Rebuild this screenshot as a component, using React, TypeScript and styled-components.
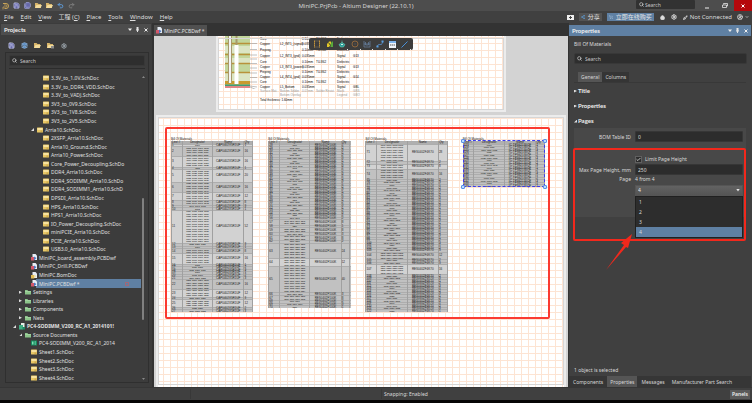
import React from "react";
import styled, { createGlobalStyle, css } from "styled-components";
import {
  Check, ChevronDown, CircleUserRound, Home, Layers, PlugZap,
  Redo2, Save, SaveAll, Search, Settings, Share2, Undo2, ShoppingCart,
} from "lucide-react";

const GlobalStyle = createGlobalStyle`
  * { box-sizing: border-box; }
  html, body { margin: 0; background: #fff; }
  body { overflow: hidden; }
  body, button, input, select {
    font-family: "Noto Sans", "Noto Sans CJK SC", sans-serif;
    font-size: 5px;
    line-height: 8px;
    color: #dadada;
  }
  button, input, select { margin: 0; padding: 0; border: 0; background: none; outline: none; }
  svg { display: block; flex: none; }
`;

/* ---------- shell ---------- */

const Shell = styled.div`
  display: grid;
  grid-template-rows: 11px 12px minmax(0, 1fr) 13px 3px;
  height: calc(100vh - 1px);
  margin-right: 1px;
  background: #404040;
`;
const TitleBar = styled.header`
  display: grid;
  grid-template-columns: 1fr auto 1fr;
  align-items: center;
  background: #4d4d4d;
`;
const QuickIcons = styled.div`
  display: flex;
  align-items: center;
  gap: 4px;
  padding-left: 2px;
`;
const IconButton = styled.button<{ $tone?: string }>`
  display: flex;
  align-items: center;
  justify-content: center;
  width: 7px;
  height: 8px;
  color: ${(p) => p.$tone ?? "#dcdcdc"};
`;
const AppTitle = styled.h1`
  margin: 0 0 0 -40px;
  font-size: 6px;
  font-weight: 400;
  color: #d6d6d6;
  white-space: nowrap;
`;
const WindowControls = styled.div`
  display: flex;
  align-items: stretch;
  justify-content: flex-end;
  height: 11px;
`;
const TitleSearch = styled.label`
  display: flex;
  align-items: center;
  gap: 1px;
  width: 59px;
  height: 9px;
  margin-right: 3px;
  padding-left: 3px;
  background: #323232;
  border-radius: 1px;
`;
const PlainInput = styled.input`
  flex: 1;
  min-width: 0;
  height: 8px;
  &::placeholder { color: #c8c8c8; opacity: 1; }
`;
const WinButton = styled.button<{ $close?: boolean }>`
  display: flex;
  align-items: center;
  justify-content: center;
  width: 18px;
  color: #eee;
  ${(p) => p.$close && css`background: #b5080c;`}
`;

const MenuBar = styled.nav`
  display: flex;
  align-items: center;
  justify-content: space-between;
  background: #404040;
`;
const MenuList = styled.div`
  display: flex;
  gap: 7px;
  padding-left: 4px;
  button { font-size: 6px; color: #dedede; white-space: nowrap; }
`;
const MenuRight = styled.div`
  display: flex;
  align-items: center;
  gap: 5px;
  padding-right: 3px;
`;
const PillButton = styled.button<{ $blue?: boolean }>`
  display: flex;
  align-items: center;
  justify-content: center;
  gap: 3px;
  height: 8px;
  padding: 0 2px;
  font-size: 6px;
  line-height: 8px;
  white-space: nowrap;
  color: #e4e4e4;
  background: ${(p) => (p.$blue ? "#5f80a3" : "#535353")};
  svg { color: ${(p) => (p.$blue ? "#b6cfe8" : "#62a4e0")}; }
`;
const Account = styled.span`
  display: flex;
  align-items: center;
  gap: 2px;
  font-size: 6px;
  white-space: nowrap;
`;

const Workspace = styled.div`
  display: grid;
  grid-template-columns: 154px minmax(0, 1fr) 184px;
  min-height: 0;
`;

/* ---------- shared panel parts ---------- */

const PanelHeader = styled.div<{ $active?: boolean }>`
  display: flex;
  align-items: center;
  justify-content: space-between;
  flex: none;
  height: 11px;
  padding: 0 2px 0 3px;
  background: ${(p) => (p.$active ? "#5f80a3" : "#4d4d4d")};
  h2 { margin: 0; font: 700 6px/8px Lato, sans-serif; color: #f0f0f0; }
`;
const HeaderButtons = styled.div`
  display: flex;
  gap: 1px;
`;
const SearchField = styled.label`
  display: flex;
  align-items: center;
  gap: 3px;
  flex: none;
  height: 11px;
  padding: 0 3px 0 2px;
  background: #2e2e2e;
  border: 1px solid #383838;
  border-radius: 2px;
`;

/* ---------- projects ---------- */

const ProjectsPanel = styled.aside`
  display: flex;
  flex-direction: column;
  min-height: 0;
  padding: 1px 1px 4px;
  background: #3c3c3c;
  border-right: 2px solid #333;
`;
const ProjectTools = styled.div`
  display: flex;
  align-items: center;
  gap: 6px;
  height: 17px;
  padding: 4px 0 0 7px;
`;
const ProjectBody = styled.div`
  display: flex;
  flex-direction: column;
  flex: 1;
  min-height: 0;
  margin: 0 2px 0 4px;
  padding: 2px 3px 0;
  border: 1px solid #2f2f2f;
`;
const TreeArea = styled.div`
  display: grid;
  grid-template-columns: minmax(0, 1fr) 4px;
  flex: 1;
  min-height: 0;
  margin-top: 2px;
  padding-top: 5px;
  border-top: 1px solid #2c2c2c;
`;
const TreeList = styled.ul`
  display: grid;
  grid-auto-rows: minmax(0, 1fr);
  min-height: 0;
  margin: 0;
  padding: 0;
  list-style: none;
`;
const TreeRow = styled.li<{ $level: number; $selected?: boolean; $bold?: boolean }>`
  display: flex;
  align-items: center;
  gap: 2px;
  min-height: 0;
  margin-left: ${(p) => p.$level * 6 - 2}px;
  white-space: nowrap;
  color: #e0e0e0;
  font-weight: ${(p) => (p.$bold ? 700 : 400)};
  ${(p) => p.$selected && css`background: linear-gradient(90deg, transparent 11px, #5f80a3 11px);`}
`;
const Twist = styled.i<{ $state?: "open" | "closed" }>`
  width: 3px;
  height: 3px;
  flex: none;
  margin-right: 1px;
  background: ${(p) => (p.$state ? "#dfdfdf" : "transparent")};
  clip-path: ${(p) => (p.$state === "open" ? "polygon(100% 0, 100% 100%, 0 100%)" : "polygon(0 0, 100% 50%, 0 100%)")};
`;
const LockMark = styled.i`
  width: 4px;
  height: 4px;
  margin: 0 12px 0 auto;
  border: 1px solid #a06878;
`;
const ScrollTrack = styled.div`
  display: flex;
  flex-direction: column;
  align-items: center;
  justify-content: space-between;
  padding: 2px 0;
`;
const ScrollThumb = styled.div`
  width: 2px;
  height: 40%;
  margin-top: 62px;
  border-radius: 1px;
  background: #808080;
`;

type Kind = "sch" | "dwf" | "bom" | "folder" | "prj" | "net";

function FileIcon({ kind }: { kind: Kind }) {
  if (kind === "sch")
    return (
      <svg width="6" height="6" viewBox="0 0 12 12">
        <rect y="1" width="12" height="10" rx="1" fill="#e8c766" />
        <rect x="1" y="2" width="10" height="4" fill="#f6e2a0" />
        <path d="M7 8h4M7 10h4" stroke="#a98732" />
      </svg>
    );
  if (kind === "folder")
    return (
      <svg width="6" height="6" viewBox="0 0 12 12">
        <path d="M0 2h5l1 2h6v7H0z" fill="#8cc58a" />
        <path d="M0 5h12" stroke="#b9e0b4" />
      </svg>
    );
  if (kind === "prj")
    return (
      <svg width="6" height="7" viewBox="0 0 12 14">
        <path d="M4 0h7v9H4z" fill="#e4efe8" />
        <path d="M0 4h8v9H0z" fill="#3fae83" />
        <path d="M7 8h5v5H7z" fill="#1f8a64" />
      </svg>
    );
  if (kind === "net")
    return (
      <svg width="6" height="6" viewBox="0 0 12 12">
        <path d="M0 1h12v10H0z" fill="#178a5e" />
        <path d="M2 3h3v6H2zM7 3h3v2H7zM7 7h3v2H7z" fill="#7fe0b6" />
      </svg>
    );
  return (
    <svg width="6" height="7" viewBox="0 0 12 14">
      <path d="M3 0h6l3 3v9H3z" fill="#e8eef6" />
      <path d="M0 6h6v7H0z" fill={kind === "bom" ? "#e3bd55" : "#d4586a"} />
      <path d="M6 5l5 3-5 5z" fill={kind === "bom" ? "#efe0a8" : "#4a78c4"} />
    </svg>
  );
}

type Node = { text: string; kind: Kind; level: number; state?: "open" | "closed"; selected?: boolean; bold?: boolean };

const sheets = (level: number, names: string[]): Node[] => names.map((text) => ({ text, kind: "sch", level }));

const TREE: Node[] = [
  ...sheets(5, ["3.3V_to_1.0V.SchDoc", "3.3V_to_DDR4_VDD.SchDoc", "3.3V_to_VADJ.SchDoc", "3V3_to_0V9.SchDoc", "3V3_to_1V8.SchDoc", "3V3_to_2V5.SchDoc"]),
  { text: "Arria10.SchDoc", kind: "sch", level: 4, state: "open" },
  ...sheets(5, [
    "2XSFP_Arria10.SchDoc", "Arria10_Ground.SchDoc", "Arria10_Power.SchDoc", "Core_Power_Decoupling.SchDo",
    "DDR4_Arria10.SchDoc", "DDR4_SODIMM_Arria10.SchDo", "DDR4_SODIMM1_Arria10.SchD", "DPSDI_Arria10.SchDoc",
    "HPS_Arria10.SchDoc", "HPS1_Arria10.SchDoc", "IO_Power_Decoupling.SchDoc", "miniPCIE_Arria10.SchDoc",
    "PCIE_Arria10.SchDoc", "USB3.0_Arria10.SchDoc",
  ]),
  { text: "MiniPC_board_assembly.PCBDwf", kind: "dwf", level: 3 },
  { text: "MiniPC_Drill.PCBDwf", kind: "dwf", level: 3 },
  { text: "MiniPC.BomDoc", kind: "bom", level: 3 },
  { text: "MiniPC.PCBDwf *", kind: "dwf", level: 3, selected: true },
  { text: "Settings", kind: "folder", level: 2, state: "closed" },
  { text: "Libraries", kind: "folder", level: 2, state: "closed" },
  { text: "Components", kind: "folder", level: 2, state: "closed" },
  { text: "Nets", kind: "folder", level: 2, state: "closed" },
  { text: "PC4-SODIMM_V200_RC_A1_2014101!", kind: "prj", level: 1, state: "open", bold: true },
  { text: "Source Documents", kind: "folder", level: 2, state: "open" },
  { text: "PC4-SODIMM_V200_RC_A1_2014", kind: "net", level: 3 },
  ...sheets(3, ["Sheet1.SchDoc", "Sheet2.SchDoc", "Sheet3.SchDoc", "Sheet4.SchDoc"]),
];

/* ---------- document area ---------- */

const Center = styled.main`
  display: flex;
  flex-direction: column;
  min-width: 0;
  min-height: 0;
`;
const DocTabs = styled.div`
  display: flex;
  align-items: flex-end;
  flex: none;
  height: 13px;
  background: #333;
`;
const DocTab = styled.button`
  display: flex;
  align-items: center;
  gap: 2px;
  height: 11px;
  padding: 0 2px;
  color: #e4e4e4;
  background: #505050;
`;
const Canvas = styled.div`
  position: relative;
  display: flex;
  flex-direction: column;
  flex: 1;
  min-height: 0;
  overflow: hidden;
  background: #d3d3d3;
`;
const Sheet = styled.section<{ $cols: number; $rows: number }>`
  border: 2px solid #ececec;
  outline: 1px solid #d6d6d6;
  outline-offset: -3px;
  background:
    repeating-linear-gradient(90deg, transparent 0 5px, #fde4d3 5px 6px, transparent 6px calc(100% / ${(p) => p.$cols})),
    repeating-linear-gradient(0deg, transparent 0 5px, #fde4d3 5px 6px, transparent 6px calc(100% / ${(p) => p.$rows})),
    #fff;
`;
const StackSheet = styled(Sheet)`
  display: flex;
  gap: 3px;
  flex: none;
  width: 70%;
  height: 76px;
  margin: 0 auto;
  padding-left: 7px;
  border-top: 0;
`;
const StackTable = styled.table`
  display: grid;
  grid-auto-rows: min-content;
  width: 110px;
  font-family: "Liberation Sans", sans-serif;
  font-size: 3px;
  line-height: 4px;
  tbody { display: contents; }
`;
const StackRow = styled.tr<{ $faint?: boolean; $tall?: boolean }>`
  display: grid;
  grid-template-columns: 20px 22px 14px 21px 16px 1fr;
  align-items: center;
  height: ${(p) => (p.$tall ? 6 : p.$faint ? 4 : 5)}px;
  color: ${(p) => (p.$faint ? "#999" : "#000")};
  td { padding: 0; white-space: nowrap; }
`;

const STACK: string[][] = [
  ["Core", "", "0.10mm", "TU-862", "Dielectric", ""],
  ["Copper", "L2_INT1_(signal)", "0.035mm", "", "Signal", "G12"],
  ["Prepreg", "", "0.10mm", "TU-862", "Dielectric", ""],
  ["Copper", "L2_INT3_(gnd)", "0.035mm", "", "Signal", "G13"],
  ["Core", "", "0.10mm", "TU-862", "Dielectric", ""],
  ["Copper", "L3_INT3_(power)", "0.035mm", "", "Signal", "G13"],
  ["Prepreg", "", "0.10mm", "TU-862", "Dielectric", ""],
  ["Copper", "L4_INT4_(gnd)", "0.035mm", "", "Signal", "G14"],
  ["Core", "", "0.10mm", "TU-862", "Dielectric", ""],
  ["Copper", "L5_Bottom", "0.035mm", "", "Signal", "GBL"],
  ["Surface Mat.", "Bottom Solder", "0.01mm", "Solder Resist", "Mask", "GBS"],
  ["", "Bottom Overlay", "", "", "Legend", "GBO"],
  ["Total thickness: 1.60mm"],
];
const TALL_ROWS = [1, 2, 3];

function StackDrawing() {
  return (
    <svg width="32" height="53" viewBox="0 0 32 53">
      <rect width="25" height="49" fill="#c2d69b" />
      <path d="M0 10h25v7H0zM0 22h25v5H0zM0 36h25v9H0z" fill="#dbe5c4" />
      <path d="M0 7.5h25M0 18.5h25M0 27.5h25M0 36.5h25" stroke="#b8923a" strokeWidth="1.4" />
      <rect y="45" width="25" height="3.5" fill="#c99a2e" />
      <rect y="48.5" width="25" height="1.5" fill="#3f9c78" />
      <rect y="50" width="25" height="2" fill="#e08585" />
      <rect x="3" width="4" height="47" fill="#a79a6c" />
      <rect x="4" width="2" height="47" fill="#f4f4f4" />
      <path d="M11.5 0v9" stroke="#a79a6c" strokeWidth="2" />
      <rect x="9.5" y="9" width="4" height="39" fill="#fff" />
      <path d="M25 2.5h7M25 7.5h7M25 13.5h7M25 19h7M25 23h7M25 27.5h7M25 32h7M25 37h7M25 41.5h7M25 46h7M25 50l7 1M25 51l7 3" stroke="#999" strokeWidth=".6" />
    </svg>
  );
}

const BomSheet = styled(Sheet)`
  flex: 1;
  min-height: 0;
  margin: 3px 2px 0;
  padding: 10px 14px 0 7px;
  border-bottom: 0;
`;
const BomHighlight = styled.div`
  display: flex;
  align-items: flex-start;
  justify-content: space-between;
  height: 192px;
  padding: 8px 3px 0 4px;
  border: 2px solid #fb3a30;
  border-radius: 2px;
`;
const Bom = styled.table<{ $rows: string }>`
  display: grid;
  grid-template-rows: 4px ${(p) => p.$rows};
  width: 100%;
  height: 100%;
  min-height: 0;
  font-family: "Liberation Sans", sans-serif;
  font-size: 3px;
  line-height: 2px;
  color: #222;
  caption { display: block; text-align: left; line-height: 4px; white-space: nowrap; }
  thead, tbody { display: contents; }
`;
const BomFrame = styled.div<{ $h: number; $selected?: boolean }>`
  position: relative;
  display: grid;
  grid-template-rows: minmax(0, 1fr);
  flex: 0 0 22%;
  height: ${(p) => p.$h}px;
  ${(p) => p.$selected && css`
    &::after {
      content: "";
      position: absolute;
      inset: 3px 0 0;
      border: 1px dashed #3c3cf0;
    }
  `}
`;
const Handle = styled.i<{ $right?: boolean; $bottom?: boolean }>`
  position: absolute;
  z-index: 1;
  width: 4px;
  height: 4px;
  ${(p) => (p.$right ? "right: -2px;" : "left: -2px;")}
  ${(p) => (p.$bottom ? "bottom: -2px;" : "top: 2px;")}
  border: 1px solid #5b8fe8;
  border-radius: 1px;
  background: #b8dcff;
`;
const BomRow = styled.tr<{ $tone: "head" | "light" | "dark" }>`
  display: grid;
  grid-template-columns: 11fr 31fr 32fr 10fr;
  grid-template-rows: minmax(0, 1fr);
  min-height: 0;
  background: ${(p) => ({ head: "#b0b0b0", light: "#d2d2d2", dark: "#c1c1c1" })[p.$tone]};
  box-shadow: inset 0 1px #adadad;
  th, td {
    display: grid;
    align-content: space-evenly;
    min-width: 0;
    min-height: 0;
    padding: 0;
    font-weight: 400;
    text-align: left;
    white-space: nowrap;
    border-left: 1px solid #a0a0a0;
  }
  th:last-child, td:last-child { border-right: 1px solid #a0a0a0; }
  th:nth-child(2), th:nth-child(3), td:nth-child(2), td:nth-child(3) { text-align: center; }
`;
const Designators = styled.td`
  font-size: 2px;
  color: #000;
`;

const ones = (n: number) => Array<number>(n).fill(1);

const BOMS = [
  { prefix: "C", part: "CAP0402X5R1UF", start: 1, height: 175, lines: [1, 4, 4, 1, 5, 4, 3, 2, 1, 1, 13, 1, 1, 2, 4, 1, 1, 1, 1, 1, 1, 4, 3, 1, 3, 1, 1], light: [0, 2, 4, 6, 10, 14, 22, 24] },
  { prefix: "J", part: "RES0402F100K", start: 28, height: 171, lines: [...ones(29), 2, 1, 2, 1, 2, 1, 6, 3, 10, 1, 2, 1, 1, 1], light: [36] },
  { prefix: "R", part: "RES0402F4K70", start: 71, height: 175, lines: [7, 1, 2, 4, ...ones(29), 3, 1, 1, 4, ...ones(15)], light: [0, 2, 36] },
  { prefix: "U", part: "IC-TPS62130QF", start: 123, height: 50, lines: ones(17), light: [] as number[] },
];

function BomTable({ prefix, part, start, lines, light, height }: (typeof BOMS)[number]) {
  const selected = prefix === "U";
  return (
    <BomFrame $h={height} $selected={selected}>
      <Bom $rows={[1, ...lines].map((n) => `minmax(0, ${n}fr)`).join(" ")}>
        <caption>Bill Of Materials</caption>
        <thead>
          <BomRow $tone="head">
            <th scope="col">Line #</th>
            <th scope="col">Designator</th>
            <th scope="col">Name</th>
            <th scope="col">Qty</th>
          </BomRow>
        </thead>
        <tbody>
          {lines.map((count, i) => {
            const perLine = count > 1 ? 4 : 1 + ((i * 7) % 3);
            return (
              <BomRow key={i} $tone={light.includes(i) ? "light" : "dark"}>
                <td>{start + i}</td>
                <Designators>
                  {Array.from({ length: count }, (_, l) => (
                    <span key={l}>
                      {Array.from({ length: perLine }, (_, k) => `${prefix}${100 + i * 5 + l * 4 + k}`).join(", ")}
                    </span>
                  ))}
                </Designators>
                <td>{part}</td>
                <td>{count * perLine}</td>
              </BomRow>
            );
          })}
        </tbody>
      </Bom>
      {selected && <><Handle /><Handle $right /><Handle $bottom /><Handle $right $bottom /></>}
    </BomFrame>
  );
}

const FloatingBar = styled.div`
  position: absolute;
  top: 2px;
  left: 50%;
  display: flex;
  align-items: center;
  justify-content: space-around;
  width: 104px;
  height: 12px;
  margin-left: -52px;
  padding: 0 2px;
  border-radius: 2px;
  background: #3d3d3d;
`;
const ToolButton = styled.button<{ $more?: boolean }>`
  display: flex;
  align-items: center;
  justify-content: center;
  width: 12px;
  height: 12px;
  ${(p) => p.$more && css`background: linear-gradient(135deg, transparent 92%, #e8e8e8 92%);`}
`;

/* ---------- properties ---------- */

const PropertiesPanel = styled.aside`
  display: flex;
  flex-direction: column;
  min-width: 0;
  min-height: 0;
  padding: 2px 1px 0 0;
  background: #404040;
  border-left: 1px solid #333;
`;
const PropertiesBody = styled.div`
  display: flex;
  flex-direction: column;
  flex: 1;
  min-height: 0;
  padding: 4px 4px 0 5px;
`;
const ObjectKind = styled.p`
  margin: 0 0 5px;
`;
const Tabs = styled.div`
  display: flex;
  align-items: flex-end;
  height: 19px;
  margin: 0 1px 3px 0;
  padding-left: 4px;
  border-bottom: 1px solid #383838;
`;
const Tab = styled.button<{ $on?: boolean }>`
  height: 10px;
  padding: 0 3px;
  color: #d6d6d6;
  background: ${(p) => (p.$on ? "#555" : "#353535")};
`;
const SectionTitle = styled.h3`
  display: flex;
  align-items: center;
  height: 10px;
  margin: 0 0 5px;
  font: 700 6px/8px Lato, sans-serif;
  color: #f0f0f0;
`;
const PagesGroup = styled.div`
  position: relative;
  display: grid;
  grid-template-columns: 57px minmax(0, 1fr);
  column-gap: 4px;
  align-content: start;
  align-items: center;
  height: 89px;
  margin: -3px 1px 0 0;
  padding: 3px 3px 0 0;
  background: #484848;
  label { text-align: right; white-space: nowrap; }
`;
const Field = styled.input`
  width: 100%;
  height: 11px;
  padding: 0 2px;
  background: #2c2c2c;
  border: 1px solid #363636;
  border-radius: 1px;
`;
const CheckLine = styled.div`
  grid-column: 2;
  display: flex;
  align-items: center;
  gap: 3px;
  height: 10px;
  margin-top: 12px;
`;
const CheckBox = styled.span`
  display: grid;
  width: 7px;
  height: 7px;
  background: #2c2c2c;
  border: 1px solid #606060;
  input { appearance: none; grid-area: 1 / 1; width: 5px; height: 5px; }
  svg { grid-area: 1 / 1; pointer-events: none; }
`;
const SelectBox = styled.div`
  position: relative;
  grid-column: 2;
  display: flex;
  align-items: center;
  height: 12px;
  margin-top: 1px;
  select {
    appearance: none;
    width: 100%;
    height: 11px;
    padding: 0 2px;
    color: #eee;
    border: 1px solid #555;
    background: linear-gradient(#626262, #555);
  }
`;
const DownMark = styled.i`
  position: absolute;
  right: 3px;
  width: 4px;
  height: 3px;
  background: #e4e4e4;
  pointer-events: none;
  clip-path: polygon(0 0, 100% 0, 50% 100%);
`;
const Options = styled.ul`
  position: absolute;
  z-index: 1;
  top: 12px;
  left: 0;
  right: 0;
  margin: 0;
  padding: 0;
  list-style: none;
  background: #2d2d2d;
  border: 1px solid #202020;
`;
const Option = styled.li<{ $on?: boolean }>`
  height: 10px;
  padding: 0 3px;
  line-height: 10px;
  background: ${(p) => (p.$on ? "#5f80a3" : "transparent")};
`;
const Callout = styled.div`
  position: absolute;
  z-index: 2;
  top: 20px;
  left: -1px;
  right: 0;
  height: 93px;
  border: 2px solid #f2281c;
  border-radius: 2px;
  pointer-events: none;
`;
const CalloutArrow = styled.svg`
  position: absolute;
  z-index: 3;
  top: 106px;
  left: 32px;
`;
const SelectionNote = styled.p`
  margin: auto 0 1px;
`;
const PanelTabs = styled.div`
  display: flex;
  flex: none;
  gap: 1px;
  height: 11px;
  margin-top: 1px;
  padding-left: 1px;
  background: #363636;
`;
const PanelTab = styled.button<{ $on?: boolean }>`
  padding: 0 3px;
  white-space: nowrap;
  color: #d6d6d6;
  background: ${(p) => (p.$on ? "#555" : "transparent")};
`;

const StatusBar = styled.footer`
  display: grid;
  grid-template-columns: 190px 191px 1fr auto;
  align-items: center;
  padding-right: 2px;
  background: #404040;
  border-top: 1px solid #363636;
`;
const StatusCell = styled.span`
  height: 10px;
  padding-left: 2px;
  line-height: 10px;
  border-left: 1px solid #383838;
`;
const PanelsButton = styled.button`
  height: 9px;
  padding: 0 2px;
  background: #5a5a5a;
  font-weight: 600;
  color: #eee;
`;
const Desktop = styled.div`
  background: #060505;
`;

const MENUS = ["File", "Edit", "View", "工程 (C)", "Place", "Tools", "Window", "Help"];

function MenuLabel({ text }: { text: string }) {
  if (text.includes("(C)")) return <>工程 (<u>C</u>)</>;
  return <><u>{text[0]}</u>{text.slice(1)}</>;
}

function OpenFolder({ dark }: { dark?: boolean }) {
  return (
    <svg width="7" height="7" viewBox="0 0 14 14">
      <path d="M0 2h5l2 2h5v8H0z" fill="#d8b56a" />
      <path d="M3 6h11l-3 6H0z" fill="#f3dc9c" />
      {dark && <path d="M8 8h6v5H8z" fill="#8b8b8b" />}
    </svg>
  );
}

function PanelGlyphs() {
  return (
    <HeaderButtons>
      <IconButton aria-label="Panel menu">
        <svg width="4" height="3" viewBox="0 0 8 6"><path d="M0 1h8L4 6z" fill="#eee" /></svg>
      </IconButton>
      <IconButton aria-label="Pin panel">
        <svg width="3" height="5" viewBox="0 0 6 10"><path d="M1 0h4v5h1v2H0V5h1zM2 7h2v3H2z" fill="#e4e4e4" /></svg>
      </IconButton>
      <IconButton aria-label="Close panel">
        <svg width="4" height="4" viewBox="0 0 8 8"><path d="M1 1l6 6M7 1L1 7" stroke="#eee" strokeWidth="2" /></svg>
      </IconButton>
    </HeaderButtons>
  );
}

export default function App() {
  return (
    <>
      <GlobalStyle />
      <Shell>
        <TitleBar>
          <QuickIcons>
            <IconButton aria-label="Altium">
              <svg width="7" height="8" viewBox="0 0 14 16">
                <path d="M2 3h6a5 5 0 0 1 0 10H5" fill="none" stroke="#c9a457" strokeWidth="2" />
                <path d="M4 6h4a2 2 0 0 1 0 4H2v5" fill="none" stroke="#c9a457" strokeWidth="1.5" />
              </svg>
            </IconButton>
            <IconButton aria-label="Save" $tone="#c9cdf0"><Save size={7} fill="#6668a8" /></IconButton>
            <IconButton aria-label="Save all" $tone="#aeb2e6"><SaveAll size={7} fill="#6668a8" /></IconButton>
            <IconButton aria-label="Open"><OpenFolder /></IconButton>
            <IconButton aria-label="Open project"><OpenFolder /></IconButton>
            <IconButton aria-label="Undo" $tone="#5f9fe0"><Undo2 size={7} strokeWidth={3} /></IconButton>
            <IconButton aria-label="Redo" $tone="#808080"><Redo2 size={7} strokeWidth={3} /></IconButton>
          </QuickIcons>
          <AppTitle>MiniPC.PrjPcb - Altium Designer (22.10.1)</AppTitle>
          <WindowControls>
            <TitleSearch><Search size={5} strokeWidth={3} /><PlainInput placeholder="Search" aria-label="Search commands" /></TitleSearch>
            <WinButton aria-label="Minimize"><svg width="4" height="6" viewBox="0 0 4 6"><path d="M0 5h4" stroke="#eee" /></svg></WinButton>
            <WinButton aria-label="Restore">
              <svg width="6" height="5" viewBox="0 0 12 10"><path d="M3 3V1h8v5H9M1 4h8v5H1z" fill="none" stroke="#eee" strokeWidth="1.5" /></svg>
            </WinButton>
            <WinButton aria-label="Close" $close><svg width="4" height="4" viewBox="0 0 8 8"><path d="M1 1l6 6M7 1L1 7" stroke="#fff" strokeWidth="2" /></svg></WinButton>
          </WindowControls>
        </TitleBar>

        <MenuBar>
          <MenuList>{MENUS.map((m) => <button key={m}><MenuLabel text={m} /></button>)}</MenuList>
          <MenuRight>
            <IconButton aria-label="New"><svg width="7" height="5" viewBox="0 0 14 10"><path d="M0 0h14v10H0z" fill="#eee" /><path d="M7 2v6M4 5h6" stroke="#444" strokeWidth="2" /></svg></IconButton>
            <PillButton><Share2 size={4} fill="currentColor" />分享</PillButton>
            <PillButton $blue><ShoppingCart size={4} />立即在线购买</PillButton>
            <IconButton aria-label="Home"><Home size={5} strokeWidth={3} fill="#ddd" /></IconButton>
            <IconButton aria-label="Settings"><Settings size={6} strokeWidth={4} /></IconButton>
            <Account><PlugZap size={5} strokeWidth={4} />Not Connected</Account>
            <Account>
              <CircleUserRound size={6} strokeWidth={3} /><ChevronDown size={4} strokeWidth={4} />
            </Account>
          </MenuRight>
        </MenuBar>

        <Workspace>
          <ProjectsPanel>
            <PanelHeader><h2>Projects</h2><PanelGlyphs /></PanelHeader>
            <ProjectTools>
              <IconButton aria-label="Save" $tone="#d9dcf6"><Save size={7} fill="#6668a8" /></IconButton>
              <IconButton aria-label="Compile" $tone="#9cc4ec"><Layers size={7} fill="#5f8fc4" /></IconButton>
              <IconButton aria-label="Explore"><OpenFolder /></IconButton>
              <IconButton aria-label="Project options"><OpenFolder dark /></IconButton>
              <IconButton aria-label="Options" $tone="#aebac2"><Settings size={6} strokeWidth={3} /></IconButton>
            </ProjectTools>
            <ProjectBody>
              <SearchField><Search size={5} strokeWidth={3} /><PlainInput placeholder="Search" aria-label="Search projects" /></SearchField>
              <TreeArea>
                <TreeList>
                  {TREE.map((n, i) => (
                    <TreeRow key={i} $level={n.level} $selected={n.selected} $bold={n.bold}>
                      <Twist $state={n.state} />
                      <FileIcon kind={n.kind} />
                      <span>{n.text}</span>
                      {n.selected && <LockMark />}
                    </TreeRow>
                  ))}
                </TreeList>
                <ScrollTrack>
                  <svg width="3" height="2" viewBox="0 0 6 4"><path d="M0 4h6L3 0z" fill="#888" /></svg>
                  <ScrollThumb />
                  <svg width="3" height="2" viewBox="0 0 6 4"><path d="M0 0h6L3 4z" fill="#888" /></svg>
                </ScrollTrack>
              </TreeArea>
            </ProjectBody>
          </ProjectsPanel>

          <Center>
            <DocTabs><DocTab><FileIcon kind="dwf" />MiniPC.PCBDwf *</DocTab></DocTabs>
            <Canvas>
              <StackSheet $cols={41} $rows={11}>
                <StackDrawing />
                <StackTable>
                  <tbody>
                    {STACK.map((row, i) => (
                      <StackRow key={i} $faint={i === 10 || i === 11} $tall={TALL_ROWS.includes(i)}>
                        {row.map((c, k) => <td key={k}>{c}</td>)}
                      </StackRow>
                    ))}
                  </tbody>
                </StackTable>
              </StackSheet>
              <BomSheet $cols={59} $rows={39}>
                <BomHighlight>{BOMS.map((b) => <BomTable key={b.prefix} {...b} />)}</BomHighlight>
              </BomSheet>
              <FloatingBar>
                <ToolButton aria-label="Board view">
                  <svg width="8" height="8" viewBox="0 0 16 16"><path d="M3 2h10v12H3z" fill="none" stroke="#6f6350" strokeWidth="1.5" /><path d="M3 1v14M13 1v14" stroke="#c09238" strokeWidth="2" strokeDasharray="3 1" /></svg>
                </ToolButton>
                <ToolButton aria-label="Board section">
                  <svg width="8" height="8" viewBox="0 0 16 16"><path d="M2 14V8l4-5h4v5l-4 6z" fill="#e0c62a" /><path d="M9 14V8l3-5h2v11z" fill="#58a83c" /><path d="M5 5l4 6" stroke="#4a4a20" strokeWidth="2" /></svg>
                </ToolButton>
                <ToolButton aria-label="Component" $more>
                  <svg width="8" height="8" viewBox="0 0 16 16"><path d="M8 1v5M8 5l6 4-3 5H5L2 9z" fill="#2f9c98" stroke="#6fe0c0" /><path d="M6 9h4" stroke="#d0f4e8" strokeWidth="2" /></svg>
                </ToolButton>
                <ToolButton aria-label="Detail" $more>
                  <svg width="8" height="8" viewBox="0 0 16 16"><circle cx="8" cy="8" r="6" fill="none" stroke="#a8733c" strokeWidth="1.5" /><path d="M6 8h4" stroke="#76675a" /></svg>
                </ToolButton>
                <ToolButton aria-label="Dimension" $more>
                  <svg width="8" height="8" viewBox="0 0 16 16"><path d="M2 2v12h12V2M2 8h12M5 4v6h6V4" fill="none" stroke="#667f9e" strokeWidth="1.5" /></svg>
                </ToolButton>
                <ToolButton aria-label="Callout" $more>
                  <svg width="8" height="8" viewBox="0 0 16 16"><path d="M2 13l3-4h6l3-6" fill="none" stroke="#5590d0" strokeWidth="1.5" /><path d="M1 11h4v4H1zM11 1h4v4h-4z" fill="#5b9fe0" /></svg>
                </ToolButton>
                <ToolButton aria-label="Table" $more>
                  <svg width="7" height="7" viewBox="0 0 14 14"><path d="M0 0h14v14H0z" fill="#f0f5fb" /><path d="M0 0h14v4H0z" fill="#7eb4ec" /><path d="M2 8h10" stroke="#555" strokeWidth="2" strokeDasharray="3 1" /></svg>
                </ToolButton>
                <ToolButton aria-label="Line" $more>
                  <svg width="7" height="7" viewBox="0 0 14 14"><path d="M1 13L13 1" stroke="#4a90d8" strokeWidth="2" /></svg>
                </ToolButton>
              </FloatingBar>
            </Canvas>
          </Center>

          <PropertiesPanel>
            <PanelHeader $active><h2>Properties</h2><PanelGlyphs /></PanelHeader>
            <PropertiesBody>
              <ObjectKind>Bill Of Materials</ObjectKind>
              <SearchField><Search size={5} strokeWidth={3} /><PlainInput placeholder="Search" aria-label="Search properties" /></SearchField>
              <Tabs><Tab $on>General</Tab><Tab>Columns</Tab></Tabs>
              <SectionTitle><Twist $state="closed" />Title</SectionTitle>
              <SectionTitle><Twist $state="closed" />Properties</SectionTitle>
              <SectionTitle><Twist $state="open" />Pages</SectionTitle>
              <PagesGroup>
                <label htmlFor="table-id">BOM Table ID</label>
                <Field id="table-id" defaultValue="0" />
                <CheckLine>
                  <CheckBox><input id="limit" type="checkbox" defaultChecked /><Check size={5} strokeWidth={4} /></CheckBox>
                  <label htmlFor="limit">Limit Page Height</label>
                </CheckLine>
                <label htmlFor="max-height">Max Page Height, mm</label>
                <Field id="max-height" defaultValue="250" />
                <label htmlFor="page">Page</label>
                <output>4 from 4</output>
                <SelectBox>
                  <select id="page" defaultValue="4">
                    {[1, 2, 3, 4].map((n) => <option key={n}>{n}</option>)}
                  </select>
                  <DownMark />
                  <Options role="listbox" aria-label="Page">
                    {[1, 2, 3, 4].map((n) => <Option key={n} role="option" aria-selected={n === 4} $on={n === 4}>{n}</Option>)}
                  </Options>
                </SelectBox>
                <Callout />
                <CalloutArrow width="28" height="36" viewBox="0 0 28 36">
                  <path d="M0 36L18 11l-3-2L26 0l-4 14-2-1z" fill="#f2281c" />
                </CalloutArrow>
              </PagesGroup>
              <SelectionNote>1 object is selected</SelectionNote>
            </PropertiesBody>
            <PanelTabs>
              <PanelTab>Components</PanelTab>
              <PanelTab $on>Properties</PanelTab>
              <PanelTab>Messages</PanelTab>
              <PanelTab>Manufacturer Part Search</PanelTab>
            </PanelTabs>
          </PropertiesPanel>
        </Workspace>

        <StatusBar>
          <span />
          <StatusCell />
          <StatusCell>Snapping: Enabled</StatusCell>
          <PanelsButton>Panels</PanelsButton>
        </StatusBar>
        <Desktop />
      </Shell>
    </>
  );
}
